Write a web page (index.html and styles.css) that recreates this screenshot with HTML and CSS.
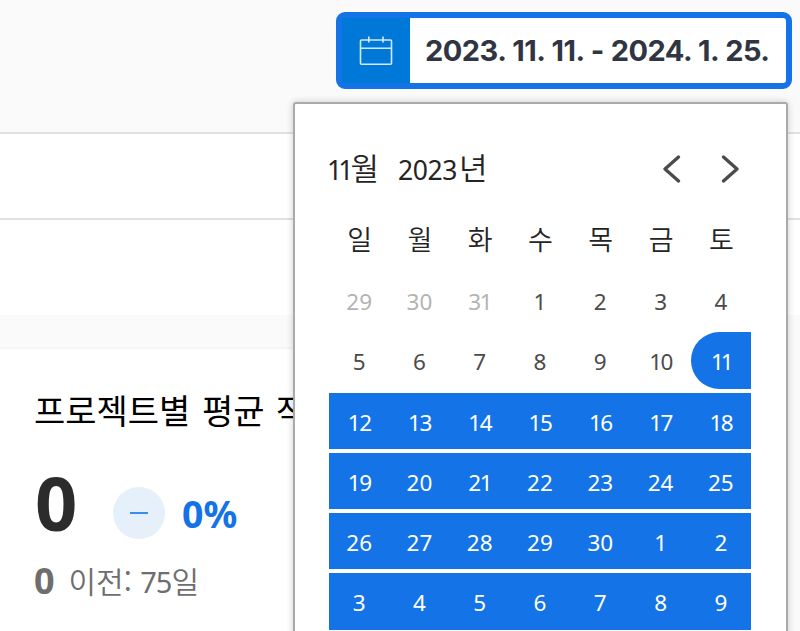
FILE: index.html
```html
<!DOCTYPE html>
<html lang="ko">
<head>
<meta charset="utf-8">
<title>프로젝트별 평균</title>
<link rel="stylesheet" href="styles.css">
</head>
<body>
<div class="page">
  <header class="topbar">
    <button class="range">
      <span class="range-icon">
        <svg width="34" height="30" viewBox="0 0 34 30" fill="none" stroke="#d3e9fb" stroke-width="1.6"><rect x="1.5" y="4" width="31" height="24.2" rx="1"/><path d="M2 12.2H32M9.800 .5V6.500M24 .5V6.500"/></svg>
      </span>
      <span class="range-text">2023. 11. 11. - 2024. 1. 25.</span>
    </button>
  </header>
  <div class="band"></div>
  <div class="band second"></div>
  <section class="card">
    <h2 class="card-title">프로젝트별 평균 작</h2>
    <div class="metric">
      <span class="metric-value">0</span>
      <span class="badge"><i class="dash"></i></span>
      <span class="metric-pct">0%</span>
    </div>
    <div class="previous"><b class="previous-value">0</b><span class="previous-label">이전: <span class="days">75</span>일</span></div>
  </section>
  <div class="popup">
    <div class="popup-head">
      <div class="month"><span class="mon">11</span><span class="unit">월</span></div>
      <div class="year"><span class="yr">2023</span><span class="unit">년</span></div>
      <svg class="chev prev" width="18" height="28" viewBox="0 0 18 28"><path d="M15.500 2L2 14L15.500 26"/></svg>
      <svg class="chev" width="18" height="28" viewBox="0 0 18 28"><path d="M2.500 2L16 14L2.500 26"/></svg>
    </div>
    <div class="week names"><span>일</span><span>월</span><span>화</span><span>수</span><span>목</span><span>금</span><span>토</span></div>
    <div class="week"><span class="muted">29</span><span class="muted">30</span><span class="muted teen">31</span><span>1</span><span>2</span><span>3</span><span>4</span></div>
    <div class="week"><span>5</span><span>6</span><span>7</span><span>8</span><span>9</span><span class="teen">10</span><span class="start">11</span></div>
    <div class="week selected"><span class="teen">12</span><span class="teen">13</span><span class="teen">14</span><span class="teen">15</span><span class="teen">16</span><span class="teen">17</span><span class="teen">18</span></div>
    <div class="week selected"><span class="teen">19</span><span>20</span><span class="teen">21</span><span>22</span><span>23</span><span>24</span><span>25</span></div>
    <div class="week selected"><span>26</span><span>27</span><span>28</span><span>29</span><span>30</span><span>1</span><span>2</span></div>
    <div class="week selected"><span>3</span><span>4</span><span>5</span><span>6</span><span>7</span><span>8</span><span>9</span></div>
  </div>
</div>
</body>
</html>
```
FILE: styles.css
```css
* { box-sizing: border-box; }
body { margin: 0; font-family: "Noto Sans", "Noto Sans CJK KR", sans-serif; }
.page { position: relative; width: 800px; height: 631px; overflow: hidden; background: #fafafa; }
.topbar { height: 132px; padding: 12px 8px 0 0; display: flex; justify-content: flex-end; }
.range { width: 456px; height: 77px; padding: 0; display: flex; border: 6px solid #1473e6; border-radius: 9px; background: #fff; }
.range-icon { width: 68px; height: 65px; display: flex; align-items: center; justify-content: center; background: #0078d7; }
.range-text { padding-left: 15px; font: 700 29px/65px Inter, sans-serif; letter-spacing: -.5px; word-spacing: .5px; color: #2f3542; white-space: nowrap; }
.band { height: 86px; background: #fff; border-top: 2px solid #e1e1e1; }
.second { height: 97px; }
.card { margin-top: 34px; width: 300px; height: 282px; padding: 37px 0 0 34px; background: #fff; box-shadow: 0 -1px 2px #f1f1f1; }
.card-title { margin: 0; font: 400 34px/48px "Noto Sans CJK KR", sans-serif; word-spacing: 2px; color: #000; white-space: nowrap; }
.metric { height: 78px; margin-top: 30px; display: flex; align-items: flex-start; }
.metric-value { width: 78px; margin-left: 1px; font-size: 74px; font-weight: 700; line-height: 77px; color: #2c2c2c; }
.badge { width: 52px; height: 52px; margin-top: 23px; border-radius: 50%; background: #e5f0fb; display: flex; align-items: center; justify-content: center; }
.dash { width: 18px; height: 2px; background: #378ef0; }
.metric-pct { margin: 26px 0 0 17px; font-size: 37.500px; font-weight: 700; line-height: 48px; color: #1473e6; }
.previous { margin-top: 17px; height: 44px; display: flex; align-items: center; color: #6e6e6e; }
.previous-value { width: 34.500px; font-size: 36px; line-height: 44px; }
.previous-label { font-family: "Noto Sans CJK KR", sans-serif; font-size: 30px; line-height: 44px; font-weight: 350; white-space: nowrap; }
.days { font: 400 29px/44px "Noto Sans", sans-serif; letter-spacing: -1px; }
.popup { position: absolute; left: 293px; top: 102px; width: 495px; height: 560px; padding: 41px 34px 0; background: #fff; border: 2px solid #aaa; border-radius: 3px; box-shadow: 0 0 7px rgba(0,0,0,.2); }
.popup-head { height: 48px; display: flex; align-items: center; color: #242424; line-height: 48px; }
.month, .year { display: flex; align-items: center; font-size: 26.500px; }
.month { width: 69px; }
.mon { width: 21.500px; margin: 0 2px 0 -2px; letter-spacing: -4px; }
.year { width: 265px; }
.yr { width: 61px; letter-spacing: -.4px; }
.mon, .yr { position: relative; top: 1px; }
.unit { margin-top: -5px; font-family: "Noto Sans CJK KR", sans-serif; font-size: 31px; font-weight: 350; }
.chev { fill: none; stroke: #4b4b4b; stroke-width: 3.3; stroke-linecap: round; stroke-linejoin: round; }
.prev { margin-right: 40px; }
.week { width: 422px; height: 56.25px; margin-bottom: 4px; display: grid; grid-template-columns: repeat(7, 1fr); font-size: 22.500px; line-height: 59px; text-align: center; color: #4b4b4b; }
.week span { height: 56.25px; }
.names { height: 56px; margin: 18px 0 5px; font: 350 27px/56px "Noto Sans CJK KR", sans-serif; color: #242424; }
.names span { padding-left: 1px; }
.week .muted { color: #b3b3b3; }
.week .teen { letter-spacing: -1.5px; }
.week.selected { background: #1473e6; color: #fff; }
.week .start { background: #1473e6; color: #fff; border-radius: 30px 0 0 30px; letter-spacing: -3px; }
```
